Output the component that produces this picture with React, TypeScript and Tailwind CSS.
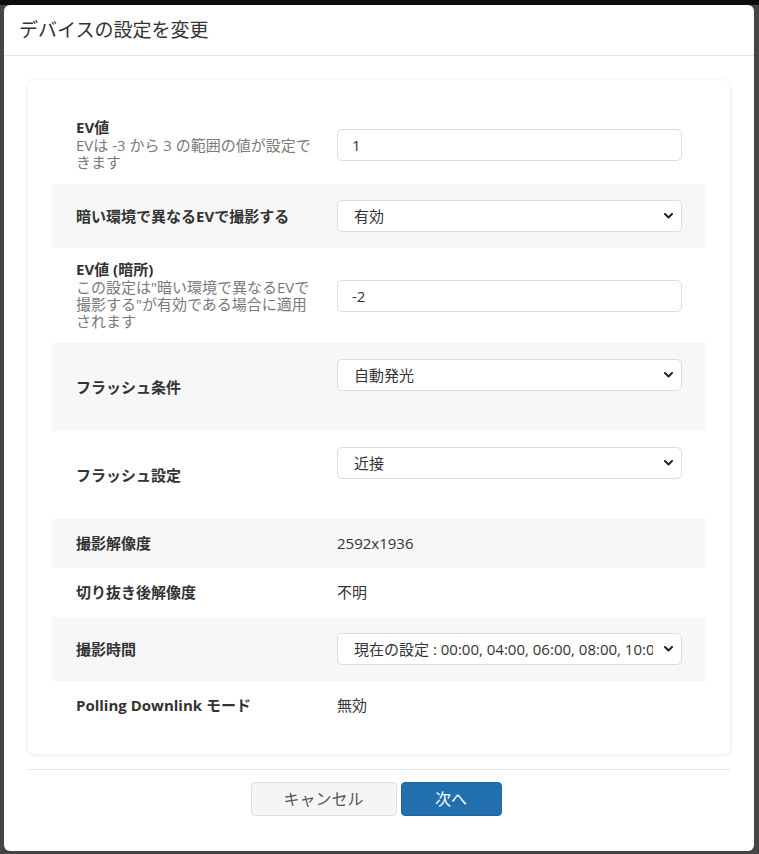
import type { FC, ReactNode } from "react";

const FONT = "font-['Open_Sans','Noto_Sans_CJK_JP',sans-serif]";

interface FieldRowProps {
  label: string;
  desc?: string[];
  gray?: boolean;
  children: ReactNode;
}

const FieldRow: FC<FieldRowProps> = ({ label, desc, gray, children }) => {
  return (
    <div
      className={`grid grid-cols-[261px_345px] items-center px-6 ${
        gray ? "bg-[#f7f7f7]" : ""
      } ${desc ? "py-[13px]" : "py-4"}`}
    >
      <div>
        <div className={`text-[15px] font-bold leading-[17px] text-[#333] ${desc ? "mb-px" : ""}`}>
          {label}
        </div>
        {desc && (
          <div className="text-[15px] leading-[17px] text-[#7a7a7a]">
            {desc.map((line) => (
              <div key={line} className="whitespace-nowrap">
                {line}
              </div>
            ))}
          </div>
        )}
      </div>
      <div>{children}</div>
    </div>
  );
};

const TextInput: FC<{ value: string }> = ({ value }) => (
  <input
    type="text"
    defaultValue={value}
    className="block h-8 w-full rounded-[5px] border border-[#dcdcdc] bg-white px-[14px] text-[15px] text-[#333] outline-none"
  />
);

const SelectBox: FC<{ value: string; options: string[] }> = ({ value, options }) => (
  <div className="relative">
    <select
      defaultValue={value}
      className="block h-8 w-full appearance-none rounded-[5px] border border-[#dcdcdc] bg-white pl-4 pr-[28px] text-[15px] text-[#333] outline-none"
    >
      {options.map((o) => (
        <option key={o} value={o}>
          {o}
        </option>
      ))}
    </select>
    <svg
      className="pointer-events-none absolute right-[9px] top-[13px]"
      width="9"
      height="6"
      viewBox="0 0 9 6"
      fill="none"
    >
      <path d="M1 1l3.5 3.5L8 1" stroke="#222" strokeWidth="2" strokeLinecap="round" strokeLinejoin="round" />
    </svg>
  </div>
);

const PlainValue: FC<{ children: ReactNode }> = ({ children }) => (
  <div className="text-[15px] leading-[17px] text-[#333]">{children}</div>
);

const SCHEDULE =
  "現在の設定 : 00:00, 04:00, 06:00, 08:00, 10:00, 12:00, 14:00, 16:00, 18:00, 20:00";

export default function App() {
  return (
    <div
      className={`min-h-screen bg-[linear-gradient(#0c0c0c_5px,#454545_5px)] pl-[4px] pt-[5px] pb-[4px] ${FONT}`}
    >
      <div className="w-[750px] overflow-hidden rounded-[6px] bg-white">
        {/* header */}
        <div className="flex h-[51px] items-center border-b border-[#e5e5e5] px-[15px]">
          <h1 className="text-[19px] font-normal text-[#333]">デバイスの設定を変更</h1>
        </div>

        {/* body */}
        <div className="px-6 pt-6">
          <div className="rounded-[6px] bg-white px-6 pt-[26px] pb-6 shadow-[0_1px_5px_rgba(0,0,0,0.09)]">
            <FieldRow label="EV値" desc={["EVは -3 から 3 の範囲の値が設定で", "きます"]}>
              <TextInput value="1" />
            </FieldRow>

            <FieldRow label="暗い環境で異なるEVで撮影する" gray>
              <SelectBox value="有効" options={["有効", "無効"]} />
            </FieldRow>

            <FieldRow
              label="EV値 (暗所)"
              desc={[
                "この設定は\"暗い環境で異なるEVで",
                "撮影する\"が有効である場合に適用",
                "されます",
              ]}
            >
              <TextInput value="-2" />
            </FieldRow>

            <FieldRow label="フラッシュ条件" gray>
              <SelectBox value="自動発光" options={["自動発光", "常に発光", "発光しない"]} />
              <div className="h-6" />
            </FieldRow>

            <FieldRow label="フラッシュ設定">
              <SelectBox value="近接" options={["近接", "遠方"]} />
              <div className="h-6" />
            </FieldRow>

            <FieldRow label="撮影解像度" gray>
              <PlainValue>2592x1936</PlainValue>
            </FieldRow>

            <FieldRow label="切り抜き後解像度">
              <PlainValue>不明</PlainValue>
            </FieldRow>

            <FieldRow label="撮影時間" gray>
              <SelectBox value={SCHEDULE} options={[SCHEDULE]} />
            </FieldRow>

            <FieldRow label="Polling Downlink モード">
              <PlainValue>無効</PlainValue>
            </FieldRow>
          </div>

          {/* footer */}
          <div className="mt-[15px] flex justify-center gap-1 border-t border-[#e5e5e5] pt-3 pb-[35px] pr-[6px]">
            <button
              type="button"
              className="h-[34px] w-[146px] rounded-[4px] border border-[#dedede] bg-[#f5f5f5] text-[16px] text-[#555]"
            >
              キャンセル
            </button>
            <button
              type="button"
              className="h-[34px] w-[101px] rounded-[4px] border border-[#1e66a3] bg-[#2270ae] text-[16px] text-white"
            >
              次へ
            </button>
          </div>
        </div>
      </div>
    </div>
  );
}
